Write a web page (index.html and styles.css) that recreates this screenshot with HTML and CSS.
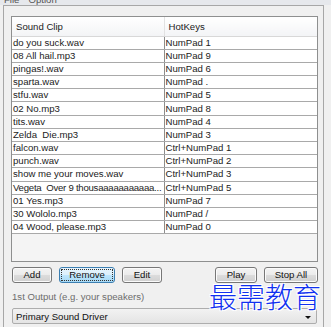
FILE: index.html
```html
<!DOCTYPE html>
<html lang="en">
<head>
    <meta charset="UTF-8">
    <title>Soundboard - Options</title>
    <link rel="stylesheet" href="styles.css">
</head>
<body>
    <div class="menu-strip">
        <span class="menu-item">File</span>
        <span class="menu-item">Option</span>
    </div>

    <div class="frame">
        <div class="list-box">
            <table class="clip-table">
                <thead>
                    <tr>
                        <th class="col-clip">Sound Clip</th>
                        <th class="col-key">HotKeys</th>
                    </tr>
                </thead>
                <tbody>
                    <tr><td>do you suck.wav</td><td>NumPad 1</td></tr>
                    <tr><td>08 All hail.mp3</td><td>NumPad 9</td></tr>
                    <tr><td>pingas!.wav</td><td>NumPad 6</td></tr>
                    <tr><td>sparta.wav</td><td>NumPad .</td></tr>
                    <tr><td>stfu.wav</td><td>NumPad 5</td></tr>
                    <tr><td>02 No.mp3</td><td>NumPad 8</td></tr>
                    <tr><td>tits.wav</td><td>NumPad 4</td></tr>
                    <tr><td>Zelda&nbsp; Die.mp3</td><td>NumPad 3</td></tr>
                    <tr><td>falcon.wav</td><td>Ctrl+NumPad 1</td></tr>
                    <tr><td>punch.wav</td><td>Ctrl+NumPad 2</td></tr>
                    <tr><td>show me your moves.wav</td><td>Ctrl+NumPad 3</td></tr>
                    <tr><td class="long-name">Vegeta&nbsp; Over 9 thousaaaaaaaaaaa...</td><td>Ctrl+NumPad 5</td></tr>
                    <tr><td>01 Yes.mp3</td><td>NumPad 7</td></tr>
                    <tr><td>30 Wololo.mp3</td><td>NumPad /</td></tr>
                    <tr><td>04 Wood, please.mp3</td><td>NumPad 0</td></tr>
                </tbody>
            </table>
        </div>

        <div class="button-row">
            <div class="button-group">
                <button class="btn btn-add">Add</button>
                <button class="btn btn-remove focused"><span class="focus-ring">Remove</span></button>
                <button class="btn btn-edit">Edit</button>
            </div>
            <div class="button-group">
                <button class="btn btn-play">Play</button>
                <button class="btn btn-stop">Stop All</button>
            </div>
        </div>

        <div class="output-label">1st Output (e.g. your speakers)</div>

        <div class="select-box">
            <span>Primary Sound Driver</span>
            <span class="select-arrow"></span>
        </div>
    </div>

    <div class="watermark">最需教育</div>
</body>
</html>
```

FILE: styles.css
```css
* {
    margin: 0;
    padding: 0;
    box-sizing: border-box;
}

body {
    font-family: 'Liberation Sans', Arial, sans-serif;
    font-size: 9.6px;
    background: #f0f0f0;
    color: #000;
    width: 331px;
    height: 327px;
    overflow: hidden;
    position: relative;
}

.menu-strip {
    height: 5px;
    overflow: hidden;
    display: flex;
    gap: 9px;
    padding-left: 4px;
    background: #e6e8ec;
}

.menu-item {
    display: block;
    line-height: 10px;
    margin-top: -5px;
    color: #555;
}

.frame {
    margin-left: 3px;
    width: 321px;
    height: 330px;
    border: 1px solid #a7a7a7;
    border-bottom: none;
    padding: 10px 5px 0 7px;
}

.list-box {
    height: 246px;
    border: 1px solid #8e8f8f;
    background: #f4f4f4;
    overflow: hidden;
}

.clip-table {
    width: 100%;
    border-collapse: collapse;
    table-layout: fixed;
}

.clip-table th {
    height: 19px;
    font-weight: normal;
    text-align: left;
    padding-left: 4px;
    padding-top: 1px;
    background: linear-gradient(#ffffff, #f3f4f6);
    border-bottom: 1px solid #d8d8d8;
    color: #222;
}

.clip-table th.col-clip {
    width: 152px;
    border-right: 1px solid #e2e2e2;
}

.clip-table td {
    height: 13.2px;
    line-height: 12px;
    padding: 0 0 0 1px;
    background: #fff;
    border-bottom: 1px solid #a9a9a9;
    white-space: nowrap;
    overflow: hidden;
    color: #222;
}

.clip-table td:first-child {
    border-right: 1px solid #8d8d8d;
}

.clip-table td.long-name {
    letter-spacing: -0.25px;
}

.button-row {
    display: flex;
    justify-content: space-between;
    margin-top: 5px;
    padding-left: 1px;
}

.button-group {
    display: flex;
    gap: 7px;
}

.btn {
    height: 16px;
    padding: 0;
    font-family: inherit;
    font-size: 9.6px;
    line-height: 14px;
    color: #111;
    border: 1px solid #777;
    border-radius: 3px;
    background: linear-gradient(#f4f4f4 0%, #ebebeb 50%, #dcdcdc 51%, #d0d0d0 100%);
    box-shadow: inset 0 0 0 1px #fbfbfb;
}

.btn-add { width: 40px; }
.btn-remove { width: 56px; }
.btn-edit { width: 40px; }
.btn-play { width: 42px; }
.btn-stop { width: 54px; }

.btn.focused {
    border-color: #3c7fb1;
    background: linear-gradient(#e6f4fc 0%, #dcf0fc 50%, #bee6fd 51%, #a7d9f5 100%);
    box-shadow: none;
    padding: 1px;
}

.focus-ring {
    display: block;
    height: 100%;
    line-height: 10px;
    border: 1px dotted #333;
}

.output-label {
    margin-top: 8px;
    padding-left: 1px;
    color: #6d6d6d;
    line-height: 12px;
}

.select-box {
    margin-top: 5px;
    margin-left: 1px;
    width: 305px;
    height: 16px;
    border: 1px solid #adadad;
    border-radius: 2px;
    background: linear-gradient(#f2f2f2, #e4e4e4);
    display: flex;
    align-items: center;
    justify-content: space-between;
    padding: 0 5px 0 3px;
    color: #111;
}

.select-arrow {
    width: 0;
    height: 0;
    border-left: 3px solid transparent;
    border-right: 3px solid transparent;
    border-top: 3px solid #111;
    margin-top: 2px;
}

.watermark {
    position: absolute;
    left: 209px;
    top: 280px;
    font-family: 'Noto Sans CJK SC', sans-serif;
    font-size: 28px;
    font-weight: 300;
    line-height: 32px;
    color: #1030f0;
    text-shadow: -1px -1px 0 #fff, 1px -1px 0 #fff, -1px 1px 0 #fff, 1px 1px 0 #fff;
}
```
